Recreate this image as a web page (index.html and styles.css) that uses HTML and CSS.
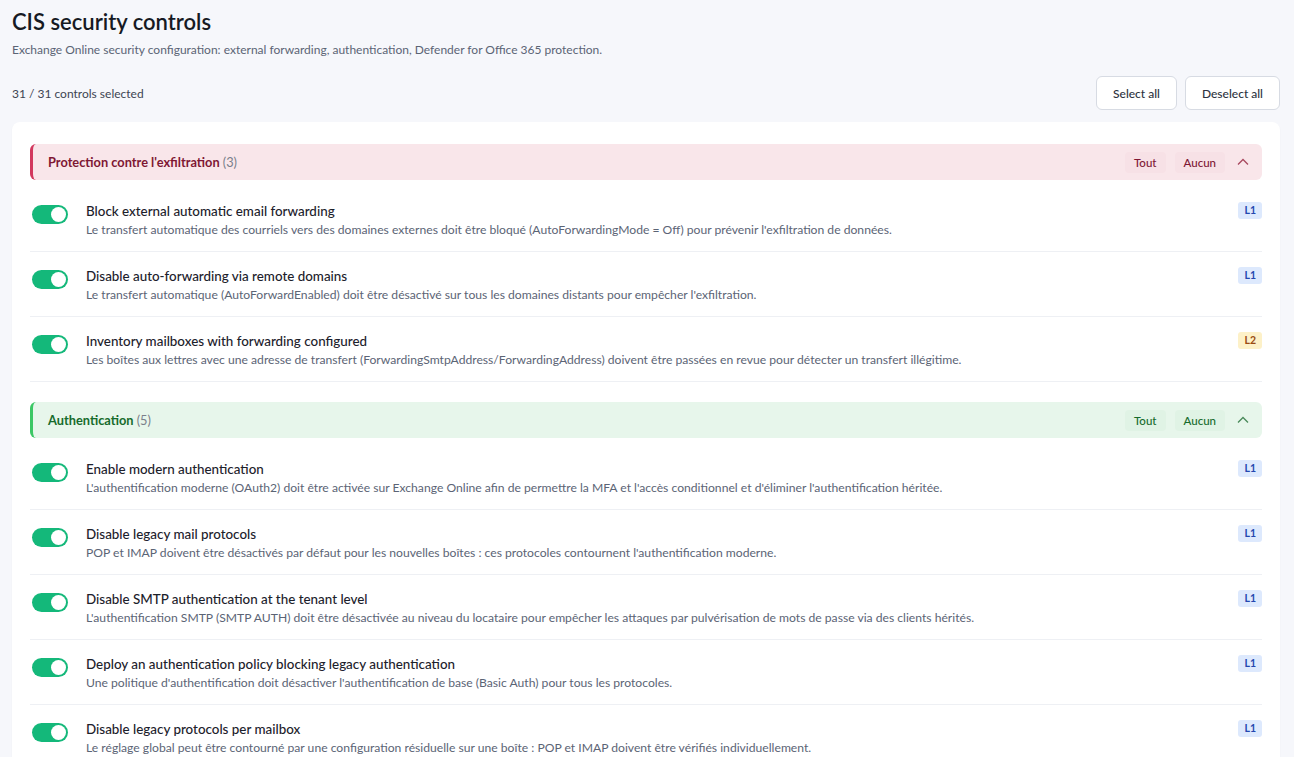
FILE: index.html
```html
<!DOCTYPE html>
<html lang="en">
<head>
<meta charset="UTF-8">
<meta name="viewport" content="width=device-width, initial-scale=1.0">
<title>CIS security controls</title>
<link rel="stylesheet" href="styles.css">
</head>
<body>

  <h1 class="page-title">CIS security controls</h1>
  <p class="page-sub">Exchange Online security configuration: external forwarding, authentication, Defender for Office 365 protection.</p>

  <div class="toolbar">
    <span class="count">31 / 31 controls selected</span>
    <div class="toolbar-actions">
      <button class="btn">Select all</button>
      <button class="btn">Deselect all</button>
    </div>
  </div>

  <div class="card">

    <!-- Group: exfiltration -->
    <div class="group-head red">
      <span class="group-name">Protection contre l'exfiltration <span class="group-count">(3)</span></span>
      <div class="group-actions">
        <button class="gbtn">Tout</button>
        <button class="gbtn">Aucun</button>
        <svg class="chev" width="14" height="14" viewBox="0 0 14 14"><path d="M2 9.5 L7 4.5 L12 9.5" fill="none" stroke="currentColor" stroke-width="1.3"/></svg>
      </div>
    </div>

    <div class="row">
      <span class="toggle on"></span>
      <div class="row-text">
        <div class="row-title">Block external automatic email forwarding</div>
        <div class="row-desc">Le transfert automatique des courriels vers des domaines externes doit être bloqué (AutoForwardingMode = Off) pour prévenir l'exfiltration de données.</div>
      </div>
      <span class="badge l1">L1</span>
    </div>
    <div class="row">
      <span class="toggle on"></span>
      <div class="row-text">
        <div class="row-title">Disable auto-forwarding via remote domains</div>
        <div class="row-desc">Le transfert automatique (AutoForwardEnabled) doit être désactivé sur tous les domaines distants pour empêcher l'exfiltration.</div>
      </div>
      <span class="badge l1">L1</span>
    </div>
    <div class="row">
      <span class="toggle on"></span>
      <div class="row-text">
        <div class="row-title">Inventory mailboxes with forwarding configured</div>
        <div class="row-desc">Les boîtes aux lettres avec une adresse de transfert (ForwardingSmtpAddress/ForwardingAddress) doivent être passées en revue pour détecter un transfert illégitime.</div>
      </div>
      <span class="badge l2">L2</span>
    </div>

    <!-- Group: authentication -->
    <div class="group-head green">
      <span class="group-name">Authentication <span class="group-count">(5)</span></span>
      <div class="group-actions">
        <button class="gbtn">Tout</button>
        <button class="gbtn">Aucun</button>
        <svg class="chev" width="14" height="14" viewBox="0 0 14 14"><path d="M2 9.5 L7 4.5 L12 9.5" fill="none" stroke="currentColor" stroke-width="1.3"/></svg>
      </div>
    </div>

    <div class="row">
      <span class="toggle on"></span>
      <div class="row-text">
        <div class="row-title">Enable modern authentication</div>
        <div class="row-desc">L'authentification moderne (OAuth2) doit être activée sur Exchange Online afin de permettre la MFA et l'accès conditionnel et d'éliminer l'authentification héritée.</div>
      </div>
      <span class="badge l1">L1</span>
    </div>
    <div class="row">
      <span class="toggle on"></span>
      <div class="row-text">
        <div class="row-title">Disable legacy mail protocols</div>
        <div class="row-desc">POP et IMAP doivent être désactivés par défaut pour les nouvelles boîtes : ces protocoles contournent l'authentification moderne.</div>
      </div>
      <span class="badge l1">L1</span>
    </div>
    <div class="row">
      <span class="toggle on"></span>
      <div class="row-text">
        <div class="row-title">Disable SMTP authentication at the tenant level</div>
        <div class="row-desc">L'authentification SMTP (SMTP AUTH) doit être désactivée au niveau du locataire pour empêcher les attaques par pulvérisation de mots de passe via des clients hérités.</div>
      </div>
      <span class="badge l1">L1</span>
    </div>
    <div class="row">
      <span class="toggle on"></span>
      <div class="row-text">
        <div class="row-title">Deploy an authentication policy blocking legacy authentication</div>
        <div class="row-desc">Une politique d'authentification doit désactiver l'authentification de base (Basic Auth) pour tous les protocoles.</div>
      </div>
      <span class="badge l1">L1</span>
    </div>
    <div class="row">
      <span class="toggle on"></span>
      <div class="row-text">
        <div class="row-title">Disable legacy protocols per mailbox</div>
        <div class="row-desc">Le réglage global peut être contourné par une configuration résiduelle sur une boîte : POP et IMAP doivent être vérifiés individuellement.</div>
      </div>
      <span class="badge l1">L1</span>
    </div>

  </div>

</body>
</html>
```

FILE: styles.css
```css
/* Page */
body {
  margin: 0;
  padding: 8px 14px 0 12px;
  background-color: #f6f7fb;
  font-family: Lato, "Noto Sans", sans-serif;
  color: #1f2430;
}

.page-title {
  margin: 0;
  font-size: 22px;
  font-weight: 600;
  line-height: 28px;
  color: #161a23;
}

.page-sub {
  margin: 6px 0 0;
  font-size: 12px;
  line-height: 16px;
  color: #5b6475;
}

/* Toolbar */
.toolbar {
  display: flex;
  align-items: center;
  justify-content: space-between;
  margin-top: 18px;
}

.count {
  font-size: 12px;
  color: #3d4452;
}

.toolbar-actions {
  display: flex;
  gap: 8px;
}

.btn {
  height: 34px;
  padding: 0 16px;
  background: #fff;
  border: 1px solid #d7dbe3;
  border-radius: 6px;
  font-family: inherit;
  font-size: 12px;
  font-weight: 500;
  color: #2c3340;
}

/* Card */
.card {
  margin-top: 12px;
  background: #fff;
  border-radius: 8px;
  padding: 22px 18px 0;
  box-shadow: 0 1px 2px rgba(20, 30, 60, 0.04);
}

.group-head {
  display: flex;
  align-items: center;
  justify-content: space-between;
  height: 36px;
  padding: 0 12px 0 15px;
  border-left: 3px solid;
  border-radius: 6px;
  margin-bottom: 7px;
}

.row + .group-head {
  margin-top: 20px;
}

.group-name {
  font-size: 12.8px;
  font-weight: 700;
}

.group-count {
  font-weight: 400;
  color: #7a7f8a;
}

.group-actions {
  display: flex;
  align-items: center;
  gap: 9px;
}

.gbtn {
  height: 21px;
  padding: 0 9px;
  border: none;
  border-radius: 4px;
  font-family: inherit;
  font-size: 11.5px;
  font-weight: 500;
}

.chev {
  margin-left: 2px;
}

.group-head.red {
  background: #f9e6ea;
  border-color: #d2385e;
  color: #7f1734;
}

.group-head.red .gbtn {
  background: #f7e1e6;
  color: #7f1734;
}

.group-head.red .chev {
  color: #a8495f;
}

.group-head.green {
  background: #e7f6eb;
  border-color: #3cc765;
  color: #166b2c;
}

.group-head.green .gbtn {
  background: #e0f3e5;
  color: #166b2c;
}

.group-head.green .chev {
  color: #4a8a5a;
}

/* Rows */
.row {
  display: flex;
  align-items: flex-start;
  padding: 15px 0 13px 2px;
  border-bottom: 1px solid #eef0f4;
}

.toggle {
  position: relative;
  flex: none;
  width: 36px;
  height: 19px;
  margin-top: 3px;
  border-radius: 10px;
  background: #14b87a;
}

.toggle::after {
  content: "";
  position: absolute;
  top: 2px;
  right: 2px;
  width: 15px;
  height: 15px;
  border-radius: 50%;
  background: #fff;
}

.row-text {
  flex: 1;
  margin-left: 18px;
}

.row-title {
  font-size: 13.4px;
  font-weight: 500;
  line-height: 18px;
  color: #1c212b;
}

.row-desc {
  margin-top: 2px;
  font-size: 12.15px;
  line-height: 16px;
  color: #5b6475;
}

.badge {
  flex: none;
  padding: 2px 6px;
  border-radius: 3px;
  font-size: 10.5px;
  font-weight: 700;
  line-height: 13px;
}

.badge.l1 {
  background: #dde9fd;
  color: #2448b0;
}

.badge.l2 {
  background: #fdf1c8;
  color: #9a4b12;
}
```
